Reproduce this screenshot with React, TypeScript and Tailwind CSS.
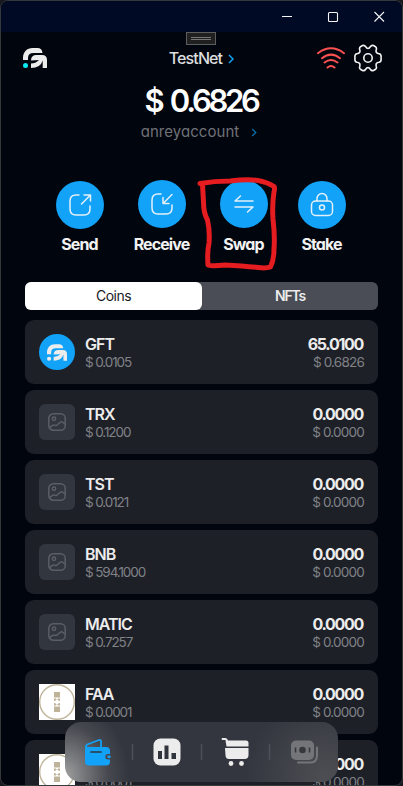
import React from "react";

const rows = [
  { name: "GFT", price: "$ 0.0105", amount: "65.0100", value: "$ 0.6826", icon: "gft" },
  { name: "TRX", price: "$ 0.1200", amount: "0.0000", value: "$ 0.0000", icon: "none" },
  { name: "TST", price: "$ 0.0121", amount: "0.0000", value: "$ 0.0000", icon: "none" },
  { name: "BNB", price: "$ 594.1000", amount: "0.0000", value: "$ 0.0000", icon: "none" },
  { name: "MATIC", price: "$ 0.7257", amount: "0.0000", value: "$ 0.0000", icon: "none" },
  { name: "FAA", price: "$ 0.0001", amount: "0.0000", value: "$ 0.0000", icon: "faa" },
  { name: "FAB", price: "$ 0.0001", amount: "0.0000", value: "$ 0.0000", icon: "faa" },
];

function Logo({ dot, className }: { dot: string; className: string }) {
  return (
    <svg viewBox="0 0 24 20" className={className}>
      <path d="M0 12V10C0 4 4 0 9.500 0H14.500Q19 0 19.500 5H10.500Q5 5 5 10V12Z" fill="#ececec" />
      <path d="M8 12.500Q8 7 13.500 7H19Q24 7 24 12V20H19.700V12.500Q17.500 20 8 20V15.500Q12.500 15.500 16 12Z" fill="#ececec" />
      <circle cx="2.500" cy="17.500" r="2.500" fill={dot} />
    </svg>
  );
}

function CoinIcon({ kind }: { kind: string }) {
  if (kind === "gft")
    return (
      <div className="flex size-9 items-center justify-center rounded-full bg-[#12a2f7]">
        <Logo dot="#ececec" className="h-[17px] w-5" />
      </div>
    );
  if (kind === "faa")
    return (
      <svg viewBox="0 0 36 36" className="size-9 bg-white">
        <circle cx="18" cy="18" r="17.300" fill="none" stroke="#bfb49a" strokeWidth="1.400" />
        <path d="M15 8h6v5.500h-6zM15 22.500h6V28h-6zM15 14.500h2v1h2v-1h2v2.500h-1.500v-1h-3v1H15zM15 21.500h2v-1h2v1h2V19h-1.500v1h-3v-1H15z" fill="#bfb49a" />
      </svg>
    );
  return (
    <div className="flex size-9 items-center justify-center rounded-md bg-[#32363f]">
      <svg viewBox="0 0 18 18" className="size-[18px]" fill="none" stroke="#5b5e66" strokeWidth="1.500">
        <rect x=".8" y=".8" width="16.400" height="16.400" rx="4.500" />
        <circle cx="6" cy="5.700" r="1.700" />
        <path d="M1.500 14.500L5 12.200Q6 11.600 7 12.300Q8 13 9 12L12.500 9.200Q13.700 8.400 14.800 9.300L17 11" />
      </svg>
    </div>
  );
}

function Action({ label, labelClass, className, children }: { label: string; labelClass: string; className: string; children: React.ReactNode }) {
  return (
    <div className={"flex w-20 flex-col items-center " + className}>
      <div className="flex size-12 items-center justify-center rounded-full bg-[#12a2f7]">
        <svg viewBox="0 0 48 48" className="size-12" fill="none" stroke="#e4f0f8" strokeWidth="1.500" strokeLinecap="round" strokeLinejoin="round">
          {children}
        </svg>
      </div>
      <span className={"mr-px whitespace-nowrap text-base leading-5 font-bold tracking-[-0.9px] text-[#f2f2f2] " + labelClass}>{label}</span>
    </div>
  );
}

export default function App() {
  return (
    <div className="h-[786px] w-[403px] overflow-hidden bg-[#17191e] font-['Inter','Liberation_Sans',sans-serif] [font-feature-settings:'cv11']">
      <div className="relative flex h-[786px] w-[403px] flex-col overflow-hidden rounded-lg border border-[#36383b] bg-[#01050e]">
        <div className="flex h-[31px] shrink-0 items-center justify-end bg-[#000a24]">
          <svg viewBox="0 0 120 30" className="h-[30px] w-[120px]" fill="none" stroke="#f4f4f6" strokeWidth="1.100">
            <path d="M0 14.500h10M92.500 10l9.500 9.500M102 10l-9.500 9.500" />
            <rect x="46.500" y="10.500" width="9" height="9" rx="1" />
          </svg>
        </div>

        <header className="flex h-[53px] shrink-0 justify-between pr-5 pl-[22px]">
          <Logo dot="#07eaf0" className="mt-4 h-5 w-6" />
          <div className="mt-4 ml-[39px] flex h-5 items-center">
            <span className="text-base leading-5 font-medium tracking-[-0.9px] text-[#dedede]">TestNet</span>
            <svg viewBox="0 0 6 10" className="mt-px ml-1.5 h-2.5 w-1.5" fill="none" stroke="#12a2f7" strokeWidth="1.500"><path d="M1 1l4 4-4 4" /></svg>
          </div>
          <div className="flex">
            <svg viewBox="0 0 28 24" className="mt-[14px] h-6 w-7" fill="none" stroke="#fa5151" strokeWidth="2" strokeLinecap="round">
              <path d="M1 7.200Q14-2.500 27 7.200M5 12.200Q14 5 23 12.200M7.500 16.500Q14 11.500 20.500 16.500M10.500 21.500Q14 18.500 17.500 21.500" />
            </svg>
            <svg viewBox="0 0 28 28" className="ml-[9px] mt-3 size-7" fill="none" stroke="#f2f2f2" strokeWidth="1.600" strokeLinejoin="round">
              <circle cx="14" cy="14" r="4.200" />
              <path d="M11.500 2.500Q10.500.9 8.500 1.500L6.800 2.500Q5 3.500 5.700 5.500Q6.800 9.500 3 9.700Q.9 10 .9 12.500V15.500Q.9 18 3 18.300Q6.800 18.500 5.700 22.500Q5 24.500 6.800 25.500L8.500 26.500Q10.500 27.100 11.500 25.500Q14 21.500 16.500 25.500Q17.500 27.100 19.500 26.500L21.200 25.500Q23 24.500 22.300 22.500Q21.200 18.500 25 18.300Q27.100 18 27.100 15.500V12.500Q27.100 10 25 9.700Q21.200 9.500 22.300 5.500Q23 3.500 21.200 2.500L19.500 1.500Q17.500.9 16.500 2.500Q14 6.500 11.500 2.500Z" />
            </svg>
          </div>
        </header>

        <div className="flex shrink-0 flex-col items-center">
          <div className="mr-px h-8 text-[31px] leading-8 font-semibold tracking-[-3.3px] text-white [word-spacing:4px]">$ 0.6826</div>
          <div className="mt-[5px] mr-[5px] flex h-5 items-center">
            <span className="text-[15px] leading-5 tracking-[0.05px] text-[#707277]">anreyaccount</span>
            <svg viewBox="0 0 6 10" className="ml-3 h-[9px] w-1.5" fill="none" stroke="#0b6da8" strokeWidth="1.500"><path d="M1 1l4 4-4 4" /></svg>
          </div>
        </div>

        <div className="mt-[38px] ml-[39px] flex h-[102px] shrink-0">
          <Action label="Send" className="pt-px" labelClass="mt-[5px]">
            <path d="M23 14h-3q-6 0-6 6v8q0 6 6 6h8q6 0 6-6v-3M25.500 23L34 14.500M28 14h6.500v6" />
          </Action>
          <Action label="Receive" className="ml-0.5" labelClass="mt-1.5">
            <path d="M23 14h-3q-6 0-6 6v8q0 6 6 6h8q6 0 6-6v-3M34 14.500L25.500 23M25 17.500v6h6" />
          </Action>
          <Action label="Swap" className="ml-0.5" labelClass="mt-1.5">
            <path d="M33 21H15L20.500 16M15 27H33L27.500 32" />
          </Action>
          <Action label="Stake" className="-ml-0.5 pt-px" labelClass="mt-[5px]">
            <rect x="13.500" y="20" width="21" height="14.500" rx="4" />
            <path d="M19 20v-2.500a5 5 0 0 1 10 0V20" />
            <circle cx="24" cy="26.500" r="2.500" />
          </Action>
        </div>

        <div className="mx-6 flex h-7 shrink-0 rounded-md bg-[#4a4d55] text-center text-sm leading-7">
          <div className="w-[177px] rounded-md bg-white tracking-[-0.5px] text-[#191b1f]">Coins</div>
          <div className="flex-1 font-semibold tracking-[-1.2px] text-[#ececec]">NFTs</div>
        </div>

        <div className="mx-6 mt-2.5 flex flex-col gap-1.5">
          {rows.map((r) => (
            <div key={r.name} className="flex h-16 shrink-0 items-center rounded-[9px] bg-[#1e2028] px-3.5">
              <CoinIcon kind={r.icon} />
              <div className="ml-2.5 pt-0.5">
                <div className="h-[18px] text-base leading-[18px] font-semibold tracking-[-1px] text-[#ececec]">{r.name}</div>
                <div className="h-[18px] text-[13.500px] leading-[18px] tracking-[-1.1px] text-[#808286]">{r.price}</div>
              </div>
              <div className="ml-auto pt-0.5 text-right">
                <div className="mr-px h-[18px] text-base leading-[18px] font-bold tracking-[-1.3px] text-[#ececec]">{r.amount}</div>
                <div className="h-[18px] text-[13.500px] leading-[18px] tracking-[-0.8px] text-[#808286]">{r.value}</div>
              </div>
            </div>
          ))}
        </div>

        <div className="absolute top-[31px] left-[185px] flex h-[13px] w-[30px] flex-col items-center justify-center gap-px border border-[#5d5d5f] bg-[#202020]">
          <div className="h-px w-5 bg-[#777]" />
          <div className="h-px w-5 bg-[#777]" />
        </div>

        <svg viewBox="0 0 403 786" className="pointer-events-none absolute -top-px -left-px h-[786px] w-[403px]" fill="none" stroke="#e51c20" strokeWidth="5" strokeLinecap="round" strokeLinejoin="round">
          <path d="M200 183.500Q214 181 230 181Q248 179 258 180.500Q267 182 274 186.500Q275 188 274 192Q272 205 273 219Q275 236 274 249Q274 260 270.500 267Q266 268.500 258 267.500Q244 266 225 265Q212 266.500 208 265Q207 253 209 243Q210 231 207.500 220Q203.500 213 203.500 202L202.500 184" />
        </svg>

        <nav className="absolute top-[721px] left-16 flex h-[60px] w-[273px] rounded-2xl bg-[radial-gradient(ellipse_64px_76px_at_0px_54px,#a0a0a0_0%,#76777b_30%,#46484f_68%,#33363e00_100%),radial-gradient(circle_at_95%_90%,#4c4e53,#33363e_30%)]">
          <svg viewBox="0 0 273 60" className="h-[60px] w-[273px]">
            <path d="M67.500 22v16M136.500 22v16M204.500 22v16" stroke="#4d5058" strokeWidth="1.500" />
            <path d="M21.200 26v-2q0-1 1-1.500L34 18q2-.5 2 1.500V25" fill="none" stroke="#12a2f7" strokeWidth="1.800" />
            <path d="M20 24q1 1 3 1H41q4 0 4 4v3h-2a2.700 2.700 0 0 0 0 5.500h2v2q0 4-4 4H24q-4 0-4-4Z" fill="#12a2f7" />
            <path d="M43.500 33.500h2v2.500h-2a1.250 1.250 0 0 1 0-2.500z" fill="#12a2f7" />
            <path d="M26 30h10" stroke="#30343c" strokeWidth="1.700" strokeLinecap="round" />
            <rect x="88.500" y="16.500" width="27" height="27" rx="7" fill="#ececec" />
            <path d="M93 29h4v8h-4zM99.500 23.500h4V37h-4zM106.500 31h4.500v6h-4.500z" fill="#30343c" />
            <g fill="#ececec">
              <path d="M157.500 17H160q1.500 0 2 1.500l.8 2.500" fill="none" stroke="#ececec" strokeWidth="1.800" strokeLinecap="round" />
              <path d="M160.500 18.500H181q2.500 0 2.500 2.500v3.500h-22Z" />
              <path d="M160 26h23.500v7q0 4-4 4H164q-3.500 0-3.500-4Z" />
              <circle cx="166" cy="41.500" r="2.400" />
              <circle cx="176.500" cy="41.500" r="2.400" />
            </g>
            <path d="M233 40.500h12q7 0 7-7V25.500" fill="none" stroke="#747579" strokeWidth="2" strokeLinecap="round" />
            <rect x="226" y="18.500" width="23" height="19.500" rx="5" fill="#747579" />
            <circle cx="237.500" cy="28" r="3.300" fill="#36383e" />
            <path d="M230.500 25.500v5M244.500 25.500v5" stroke="#36383e" strokeWidth="1.600" />
          </svg>
        </nav>
      </div>
    </div>
  );
}
